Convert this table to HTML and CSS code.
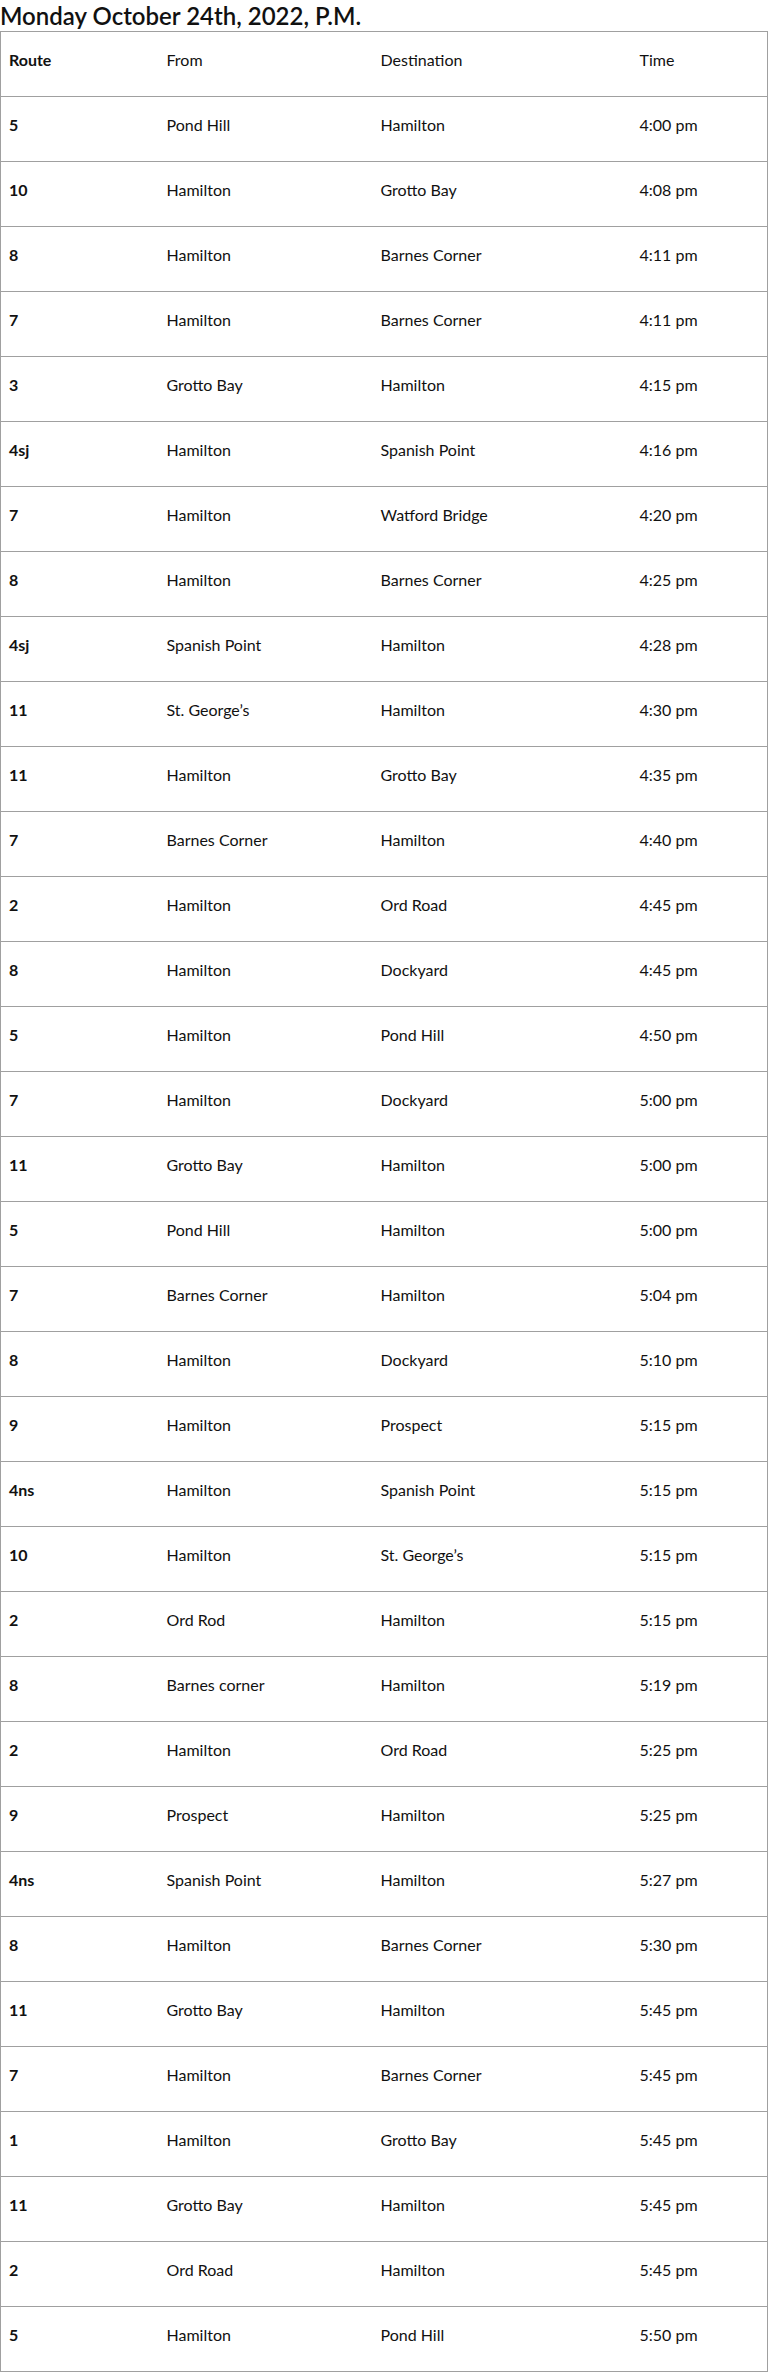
FILE: index.html
```html
<!DOCTYPE html>
<html lang="en">
<head>
<meta charset="utf-8">
<title>Bus schedule</title>
<link rel="stylesheet" href="styles.css">
</head>
<body>
<h2 class="title">Monday October 24th, 2022, P.M.</h2>
<table class="schedule">
<colgroup><col class="c-route"><col class="c-from"><col class="c-dest"><col class="c-time"></colgroup>
<thead>
<tr><th class="route">Route</th><th>From</th><th>Destination</th><th>Time</th></tr>
</thead>
<tbody>
<tr><td class="route">5</td><td>Pond Hill</td><td>Hamilton</td><td>4:00 pm</td></tr>
<tr><td class="route">10</td><td>Hamilton</td><td>Grotto Bay</td><td>4:08 pm</td></tr>
<tr><td class="route">8</td><td>Hamilton</td><td>Barnes Corner</td><td>4:11 pm</td></tr>
<tr><td class="route">7</td><td>Hamilton</td><td>Barnes Corner</td><td>4:11 pm</td></tr>
<tr><td class="route">3</td><td>Grotto Bay</td><td>Hamilton</td><td>4:15 pm</td></tr>
<tr><td class="route">4sj</td><td>Hamilton</td><td>Spanish Point</td><td>4:16 pm</td></tr>
<tr><td class="route">7</td><td>Hamilton</td><td>Watford Bridge</td><td>4:20 pm</td></tr>
<tr><td class="route">8</td><td>Hamilton</td><td>Barnes Corner</td><td>4:25 pm</td></tr>
<tr><td class="route">4sj</td><td>Spanish Point</td><td>Hamilton</td><td>4:28 pm</td></tr>
<tr><td class="route">11</td><td>St. George’s</td><td>Hamilton</td><td>4:30 pm</td></tr>
<tr><td class="route">11</td><td>Hamilton</td><td>Grotto Bay</td><td>4:35 pm</td></tr>
<tr><td class="route">7</td><td>Barnes Corner</td><td>Hamilton</td><td>4:40 pm</td></tr>
<tr><td class="route">2</td><td>Hamilton</td><td>Ord Road</td><td>4:45 pm</td></tr>
<tr><td class="route">8</td><td>Hamilton</td><td>Dockyard</td><td>4:45 pm</td></tr>
<tr><td class="route">5</td><td>Hamilton</td><td>Pond Hill</td><td>4:50 pm</td></tr>
<tr><td class="route">7</td><td>Hamilton</td><td>Dockyard</td><td>5:00 pm</td></tr>
<tr><td class="route">11</td><td>Grotto Bay</td><td>Hamilton</td><td>5:00 pm</td></tr>
<tr><td class="route">5</td><td>Pond Hill</td><td>Hamilton</td><td>5:00 pm</td></tr>
<tr><td class="route">7</td><td>Barnes Corner</td><td>Hamilton</td><td>5:04 pm</td></tr>
<tr><td class="route">8</td><td>Hamilton</td><td>Dockyard</td><td>5:10 pm</td></tr>
<tr><td class="route">9</td><td>Hamilton</td><td>Prospect</td><td>5:15 pm</td></tr>
<tr><td class="route">4ns</td><td>Hamilton</td><td>Spanish Point</td><td>5:15 pm</td></tr>
<tr><td class="route">10</td><td>Hamilton</td><td>St. George’s</td><td>5:15 pm</td></tr>
<tr><td class="route">2</td><td>Ord Rod</td><td>Hamilton</td><td>5:15 pm</td></tr>
<tr><td class="route">8</td><td>Barnes corner</td><td>Hamilton</td><td>5:19 pm</td></tr>
<tr><td class="route">2</td><td>Hamilton</td><td>Ord Road</td><td>5:25 pm</td></tr>
<tr><td class="route">9</td><td>Prospect</td><td>Hamilton</td><td>5:25 pm</td></tr>
<tr><td class="route">4ns</td><td>Spanish Point</td><td>Hamilton</td><td>5:27 pm</td></tr>
<tr><td class="route">8</td><td>Hamilton</td><td>Barnes Corner</td><td>5:30 pm</td></tr>
<tr><td class="route">11</td><td>Grotto Bay</td><td>Hamilton</td><td>5:45 pm</td></tr>
<tr><td class="route">7</td><td>Hamilton</td><td>Barnes Corner</td><td>5:45 pm</td></tr>
<tr><td class="route">1</td><td>Hamilton</td><td>Grotto Bay</td><td>5:45 pm</td></tr>
<tr><td class="route">11</td><td>Grotto Bay</td><td>Hamilton</td><td>5:45 pm</td></tr>
<tr><td class="route">2</td><td>Ord Road</td><td>Hamilton</td><td>5:45 pm</td></tr>
<tr><td class="route">5</td><td>Hamilton</td><td>Pond Hill</td><td>5:50 pm</td></tr>
</tbody>
</table>
</body>
</html>
```

FILE: styles.css
```css
html, body {
  margin: 0;
  padding: 0;
  background: #ffffff;
}

body {
  font-family: Lato, "Open Sans", "Liberation Sans", sans-serif;
  color: #111111;
  width: 768px;
}

.title {
  margin: 0;
  font-size: 24px;
  line-height: 31px;
  font-weight: 600;
  color: #111111;
}

.schedule {
  width: 768px;
  border-collapse: collapse;
  table-layout: fixed;
  border: 1px solid #a0a0a0;
  font-size: 16px;
  line-height: 24px;
}

.c-route { width: 158px; }
.c-from { width: 214px; }
.c-dest { width: 259px; }
.c-time { width: auto; }

.schedule tr {
  border-bottom: 1px solid #a0a0a0;
}

.schedule th,
.schedule td {
  padding: 16px 8px 24px 8px;
  text-align: left;
  vertical-align: top;
  font-weight: 400;
}

.schedule .route {
  font-weight: 700;
}
```
